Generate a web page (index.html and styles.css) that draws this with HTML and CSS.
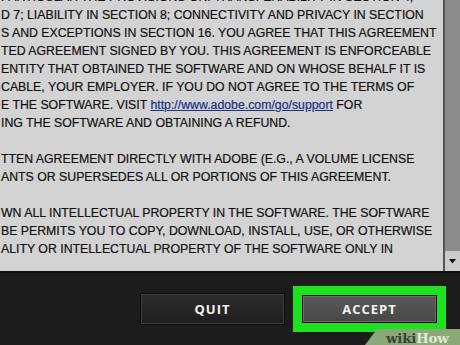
FILE: index.html
```html
<!DOCTYPE html>
<html>
<head>
    <meta charset="utf-8" />
    <title>License Agreement</title>
    <link rel="stylesheet" href="styles.css">
</head>
<body>
    <div class="window">
        <div class="license">
            <div class="text">
                <div class="lines">
                    <div class="line">PARTICULAR THE PROVISIONS ON: TRANSFERABILITY IN SECTION 4;</div>
                    <div class="line">D 7; LIABILITY IN SECTION 8; CONNECTIVITY AND PRIVACY IN SECTION</div>
                    <div class="line">S AND EXCEPTIONS IN SECTION 16. YOU AGREE THAT THIS AGREEMENT</div>
                    <div class="line">TED AGREEMENT SIGNED BY YOU. THIS AGREEMENT IS ENFORCEABLE</div>
                    <div class="line">ENTITY THAT OBTAINED THE SOFTWARE AND ON WHOSE BEHALF IT IS</div>
                    <div class="line">CABLE, YOUR EMPLOYER. IF YOU DO NOT AGREE TO THE TERMS OF</div>
                    <div class="line">E THE SOFTWARE. VISIT <a href="#" class="link">http://www.adobe.com/go/support</a> FOR</div>
                    <div class="line">ING THE SOFTWARE AND OBTAINING A REFUND.</div>
                    <div class="line">&nbsp;</div>
                    <div class="line">TTEN AGREEMENT DIRECTLY WITH ADOBE (E.G., A VOLUME LICENSE</div>
                    <div class="line">ANTS OR SUPERSEDES ALL OR PORTIONS OF THIS AGREEMENT.</div>
                    <div class="line">&nbsp;</div>
                    <div class="line">WN ALL INTELLECTUAL PROPERTY IN THE SOFTWARE. THE SOFTWARE</div>
                    <div class="line">BE PERMITS YOU TO COPY, DOWNLOAD, INSTALL, USE, OR OTHERWISE</div>
                    <div class="line">ALITY OR INTELLECTUAL PROPERTY OF THE SOFTWARE ONLY IN</div>
                </div>
            </div>
            <div class="scrollbar">
                <div class="thumb"></div>
                <div class="arrow">
                    <svg width="9" height="5" viewBox="0 0 9 5"><path d="M1 0 L8 0 L4.5 4.5 Z" fill="#111"/></svg>
                </div>
            </div>
        </div>
        <div class="footer">
            <button class="btn">QUIT</button>
            <div class="highlight">
                <button class="btn btnaccept">ACCEPT</button>
            </div>
        </div>
        <div class="watermark"><span class="wiki">wiki</span><span class="how">How</span></div>
    </div>
</body>
</html>
```

FILE: styles.css
```css
body {
    margin: 0;
    background-color: #1c1c1c;
}

.window {
    position: relative;
    width: 460px;
    height: 345px;
    overflow: hidden;
    display: flex;
    flex-direction: column;
}

.license {
    height: 271px;
    display: flex;
    border-bottom: 2px solid #0e0e0e;
}

.text {
    flex: 1;
    background-color: #d3d3d3;
    overflow: hidden;
}

.lines {
    margin-top: -12px;
    padding-left: 1px;
}

.line {
    white-space: nowrap;
    font-family: "Liberation Sans", Arial, sans-serif;
    font-size: 12.3px;
    line-height: 18px;
    color: #111111;
    -webkit-text-stroke: 0.2px #111111;
}

.link {
    color: #1c2f86;
    text-decoration: underline;
    -webkit-text-stroke: 0.2px #1c2f86;
}

.scrollbar {
    width: 15px;
    border-left: 2px solid #555555;
    display: flex;
    flex-direction: column;
    background-color: #8b8b8b;
}

.thumb {
    flex: 1;
    background-color: #8b8b8b;
}

.arrow {
    height: 20px;
    background-color: #cbcbcb;
    display: flex;
    align-items: center;
    justify-content: center;
}

.footer {
    flex: 1;
    display: flex;
    justify-content: flex-end;
    align-items: center;
    gap: 8px;
    padding-right: 14px;
}

.btn {
    width: 145px;
    height: 32px;
    border: 1px solid #0a0a0a;
    box-shadow: inset 0 0 0 1px #3c3c3c;
    background: linear-gradient(#2c2c2c, #1e1e1e);
    color: #f2f2f2;
    font-family: "Open Sans", sans-serif;
    font-weight: bold;
    font-size: 13px;
    letter-spacing: 1px;
    padding: 0;
}

.highlight {
    background-color: #1fe21f;
    padding: 9px;
}

.btnaccept {
    width: 135px;
    height: 28px;
    background: linear-gradient(#5a5a5a, #474747);
    box-shadow: inset 0 0 0 1px #6a6a6a;
}

.watermark {
    position: absolute;
    right: 0;
    bottom: 0;
    width: 95px;
    height: 16px;
    background-color: #8aa878;
    clip-path: polygon(12px 0, 100% 0, 100% 100%, 0 100%);
    font-family: "DejaVu Serif", serif;
    font-weight: bold;
    font-size: 13.5px;
    line-height: 18px;
    padding-left: 21px;
    box-sizing: border-box;
    letter-spacing: -0.3px;
}

.wiki {
    color: #3a4434;
}

.how {
    color: #e2e9da;
}
```
